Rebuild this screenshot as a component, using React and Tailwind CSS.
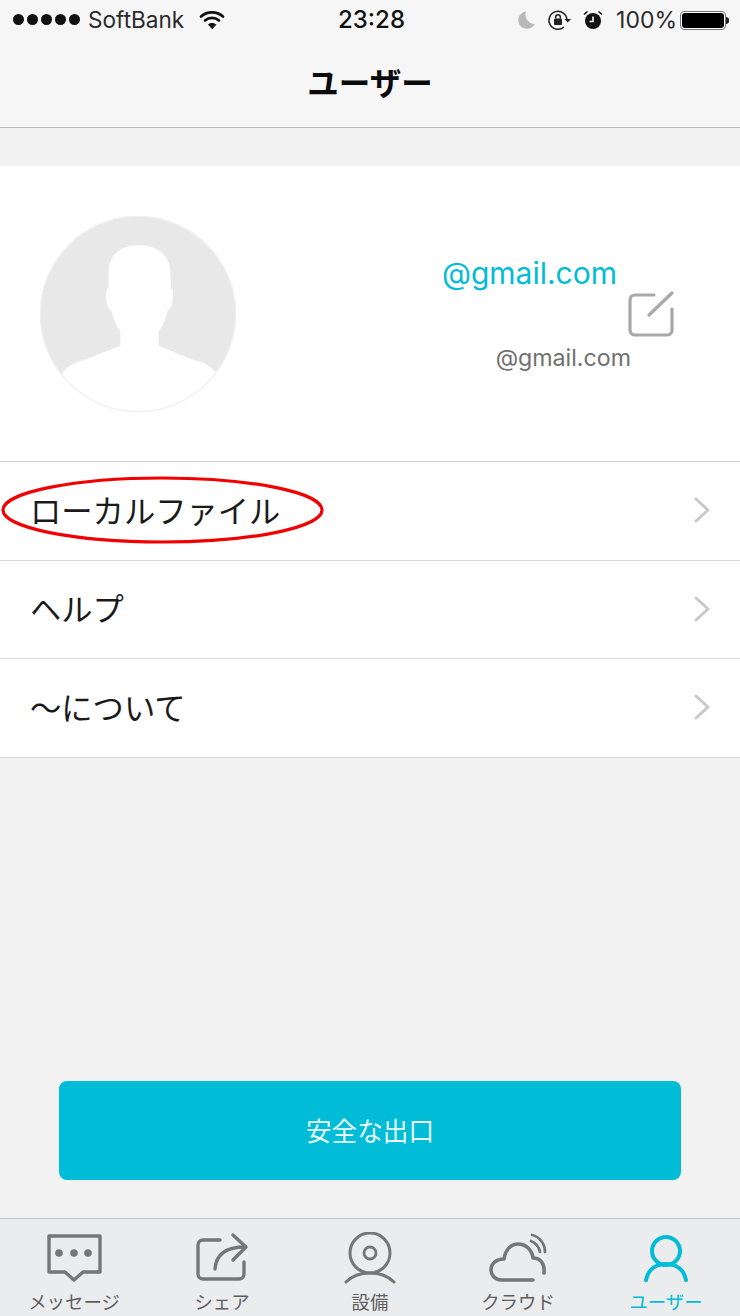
const latin = '"Inter","Noto Sans CJK JP",sans-serif';

function Chevron() {
  return (
    <svg width="18" height="26" viewBox="0 0 18 26" fill="none" className="mb-[2px] mr-[29px]">
      <path d="M3 2 L15 13 L3 24" stroke="#c8c8cc" strokeWidth="3" strokeLinecap="round" strokeLinejoin="round" />
    </svg>
  );
}

function Row({ label, tall, children }) {
  return (
    <div className={`relative flex items-center justify-between border-b border-[#d9d9d9] bg-white pl-[30px] ${tall ? "h-[99px]" : "h-[98px]"}`}>
      <span className="mt-[3px] text-[31.3px] leading-none text-[#1a1a1a]">{label}</span>
      <Chevron />
      {children}
    </div>
  );
}

function Tab({ label, vb, active, children }) {
  return (
    <div className="flex flex-col items-center">
      <svg width="60" height="52" viewBox={vb} fill="none" stroke={active ? "#00bcd6" : "#767676"} strokeWidth="4" strokeLinecap="round" strokeLinejoin="round">
        {children}
      </svg>
      <span className={`mt-[6px] text-[18.4px] leading-6 ${active ? "text-[#00bcd6]" : "text-[#5f5f5f]"}`}>{label}</span>
    </div>
  );
}

export default function App() {
  return (
    <div className="flex h-[1316px] w-[740px] flex-col overflow-hidden bg-[#f2f2f3]" style={{ fontFamily: latin }}>
      <header className="h-[128px] border-b border-[#b9b9b9] bg-[#f6f6f6]">
        <div className="flex h-[40px] items-center pl-[13px] pr-[11px] text-[22px] text-[#1d1d1d]">
          <div className="flex w-[325px] items-center">
            <div className="flex gap-[3px]">
              {[0, 1, 2, 3, 4].map((i) => (
                <span key={i} className="h-[11px] w-[11px] rounded-full bg-[#111]" />
              ))}
            </div>
            <span className="ml-[8px] w-[111px] whitespace-nowrap text-[22.6px] text-[#2a2a2a]">SoftBank</span>
            <svg width="26" height="20" viewBox="0 0 26 20" fill="none" stroke="#111" strokeWidth="2.6" strokeLinecap="round">
              <path d="M2 6.5 C8 1 18 1 24 6.5" />
              <path d="M6 10.5 C10 7 16 7 20 10.5" />
              <path d="M13 18.5 L9.5 14.5 C11.5 13 14.5 13 16.5 14.5 Z" fill="#111" strokeWidth="1" />
            </svg>
          </div>
          <span className="text-[24px] font-medium text-[#111]">23:28</span>
          <div className="ml-auto flex items-center">
            <svg width="18" height="18" viewBox="0 0 18 18" className="mr-[12px]">
              <path d="M9 0.5 A8.7 8.7 0 1 0 17.8 13 A9.5 9.5 0 0 1 9 0.5 Z" fill="#b9b9b9" />
            </svg>
            <svg width="25" height="22" viewBox="0 0 25 22" fill="none" stroke="#222" strokeWidth="1.5" className="mr-[11px]">
              <path d="M20 11 A9 9 0 1 0 17 18" />
              <path d="M17.5 10 L24 10 L20.7 13.5 Z" fill="#222" stroke="none" />
              <rect x="7" y="9.5" width="8" height="6.5" rx="1" fill="#222" stroke="none" />
              <path d="M8.7 9.5 V8 A2.3 2.3 0 0 1 13.3 8 V9.5" />
            </svg>
            <svg width="20" height="20" viewBox="0 0 20 20" className="mr-[13px]">
              <circle cx="10" cy="11" r="8" fill="#111" />
              <path d="M10 6.5 V11.5 H6.5" stroke="#f6f6f6" strokeWidth="1.6" fill="none" />
              <path d="M1 4.5 L4.5 1.5 M19 4.5 L15.5 1.5" stroke="#111" strokeWidth="1.6" />
            </svg>
            <span className="text-[23px] leading-none text-[#2a2a2a]">100%</span>
            <div className="ml-[3px] flex items-center">
              <div className="h-[19px] w-[46px] rounded-[4px] border border-[#777] bg-white p-[1px]">
                <div className="h-full w-full rounded-[3px] bg-black" />
              </div>
              <div className="h-[7px] w-[3px] rounded-r-full bg-[#222]" />
            </div>
          </div>
        </div>
        <h1 className="flex h-[87px] items-center justify-center text-[31.5px] font-bold leading-none text-[#0a0a0a]">ユーザー</h1>
      </header>

      <section className="mt-[38px] flex h-[296px] items-center justify-between border-b border-[#d0d0d0] bg-white">
        <svg width="196" height="196" viewBox="59 46 588 588" className="ml-[40px]">
          <defs>
            <clipPath id="avatar-clip">
              <circle cx="353" cy="340" r="293" />
            </clipPath>
          </defs>
          <circle cx="353" cy="340" r="293" fill="#e8e8e8" stroke="#f0f0f0" strokeWidth="3" />
          <path
            clipPath="url(#avatar-clip)"
            fill="#fff"
            d="M355 133 C410 133 450 165 450 215 L452 262 C458 265 459 272 458 285 C457 305 455 322 441 332 C437 352 430 372 415 392 L415 435 L520 478 C555 484 575 500 588 518 L620 700 L90 700 L125 518 C140 500 160 484 190 478 L300 435 L300 392 C285 372 278 352 274 332 C260 322 258 305 257 285 C256 272 258 265 265 262 L265 215 C265 165 300 133 355 133 Z"
          />
          <circle cx="353" cy="340" r="293" fill="none" stroke="#f0f0f0" strokeWidth="4" />
        </svg>
        <div className="flex flex-col items-end">
          <span className="mr-[123px] text-[30px] leading-[36px] text-[#00bcd6]">@gmail.com</span>
          <svg width="46" height="46" viewBox="0 0 46 46" fill="none" stroke="#a8a8a8" strokeWidth="3.2" strokeLinecap="round" strokeLinejoin="round" className="mr-[66px]">
            <path d="M26 4 H7 A5 5 0 0 0 2 9 V39 A5 5 0 0 0 7 44 H39 A5 5 0 0 0 44 39 V18" />
            <path d="M21 24 L44 2" />
          </svg>
          <span className="mr-[109px] mt-[8px] text-[23.2px] leading-[27px] text-[#6f6f6f]">@gmail.com</span>
        </div>
      </section>

      <Row label="ローカルファイル" tall>
        <svg width="324" height="68" viewBox="0 0 324 68" fill="none" className="absolute left-[1px] top-[14px]">
          <ellipse cx="161.5" cy="34" rx="159.5" ry="32" stroke="#f00000" strokeWidth="3.2" />
        </svg>
      </Row>
      <Row label="ヘルプ" />
      <Row label="〜について" tall />

      <div className="mt-auto px-[59px] pb-[38px]">
        <button className="flex h-[99px] w-full items-center justify-center rounded-[8px] bg-[#00bcd6] pt-[4px] text-[25.6px] text-[#e8fbff]">
          安全な出口
        </button>
      </div>

      <nav className="grid h-[98px] grid-cols-5 border-t border-[#c4c4c4] bg-[#ebecee] pt-[13px]">
        <Tab label="メッセージ" vb="44 1232 60 52">
          <path d="M49 1236 H100 V1272 H83 L74 1280 L65 1272 H49 Z" strokeWidth="3.4" />
          <circle cx="59" cy="1253" r="3.8" fill="#767676" stroke="none" />
          <circle cx="74" cy="1253" r="3.8" fill="#767676" stroke="none" />
          <circle cx="88" cy="1253" r="3.8" fill="#767676" stroke="none" />
        </Tab>
        <Tab label="シェア" vb="192 1232 60 52">
          <path d="M220 1240 H203 A5 5 0 0 0 198 1245 V1274 A5 5 0 0 0 203 1279 H239 A5 5 0 0 0 244 1274 V1262" strokeWidth="3.4" />
          <path d="M215 1269 C216 1254 226 1247 245 1247" strokeWidth="3.4" />
          <path d="M233 1235 L246 1247 L233 1260" strokeWidth="3.4" />
        </Tab>
        <Tab label="設備" vb="340 1232 60 52">
          <circle cx="370" cy="1253" r="20" strokeWidth="3" />
          <circle cx="370" cy="1253" r="6" strokeWidth="2.8" />
          <path d="M346 1282 C352 1276 360 1273 370 1273 C380 1273 388 1276 394 1282" strokeWidth="3" />
        </Tab>
        <Tab label="クラウド" vb="488 1232 60 52">
          <path d="M533 1280 H502 C494 1280 491 1274 491 1270 C491 1263 497 1259 504 1259 C505 1250 511 1244 518 1244 C526 1244 532 1250 533 1258 C540 1258 545 1263 544 1273" strokeWidth="3.6" />
          <path d="M531 1241 C536 1243 539 1247 540 1252" strokeWidth="2.8" />
          <path d="M532 1235 C540 1237 545 1244 545 1252" strokeWidth="2.8" />
        </Tab>
        <Tab label="ユーザー" vb="635 1232 60 52" active>
          <circle cx="665" cy="1251" r="14" />
          <path d="M645 1280 C647 1270 654 1264 665 1264 C676 1264 683 1270 685 1280" />
        </Tab>
      </nav>
    </div>
  );
}
